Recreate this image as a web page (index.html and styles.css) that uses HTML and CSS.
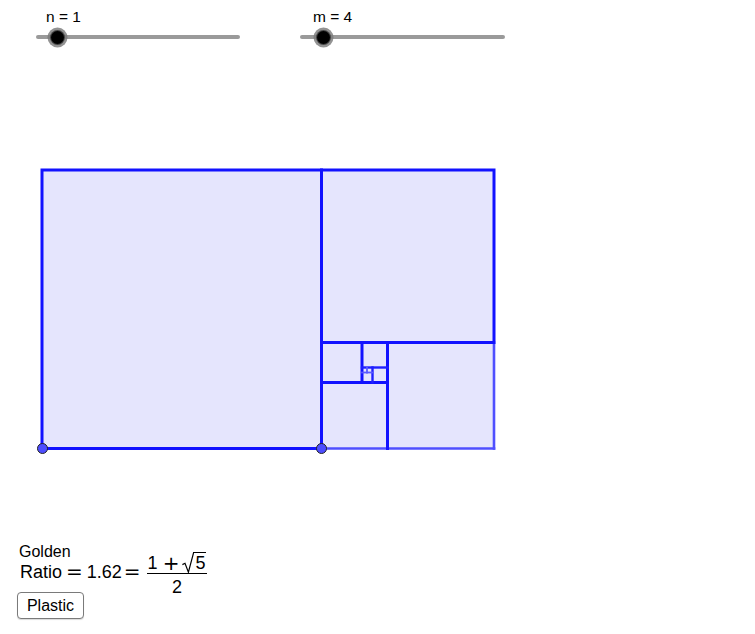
FILE: index.html
```html
<!DOCTYPE html>
<html lang="en">
<head>
<meta charset="utf-8">
<title>Golden Ratio</title>
<link rel="stylesheet" href="styles.css">
</head>
<body>
<div class="applet">
  <svg class="drawing" width="755" height="634" viewBox="0 0 755 634" xmlns="http://www.w3.org/2000/svg">
    <rect x="42" y="170" width="452" height="278.5" fill="#e5e5fd"/>
    <g stroke-linecap="square" fill="none">
      <g stroke="#4f4fff" stroke-width="2.6">
        <line x1="321.5" y1="448.5" x2="494" y2="448.5"/>
        <line x1="494" y1="342.5" x2="494" y2="448.5"/>
      </g>
      <g stroke="#1212ff" stroke-width="3">
        <rect x="42" y="170" width="279.5" height="278.5"/>
        <rect x="321.5" y="170" width="172.5" height="172.5"/>
        <line x1="387.5" y1="342.5" x2="387.5" y2="448.5"/>
        <line x1="321.5" y1="382.5" x2="387.5" y2="382.5"/>
        <line x1="362" y1="342.5" x2="362" y2="382.5"/>
      </g>
      <g stroke="#2020ff" stroke-width="2.4">
        <line x1="362" y1="367.5" x2="387.5" y2="367.5"/>
        <line x1="372.5" y1="367.5" x2="372.5" y2="382.5"/>
      </g>
      <g stroke="#5a5aff" stroke-width="1.8">
        <line x1="362" y1="372.5" x2="372.5" y2="372.5"/>
        <line x1="367" y1="367.5" x2="367" y2="372.5"/>
      </g>
    </g>
    <g fill="#4d4dff" stroke="#222" stroke-width="1">
      <circle cx="42.5" cy="448.5" r="5"/>
      <circle cx="321.5" cy="448.5" r="5"/>
    </g>
  </svg>

  <div class="slider slider-n">
    <div class="slider-label">n = 1</div>
    <div class="track"><span class="knob"></span></div>
  </div>
  <div class="slider slider-m">
    <div class="slider-label">m = 4</div>
    <div class="track"><span class="knob"></span></div>
  </div>

  <div class="formula">
    <div class="caption">Golden</div>
    <div class="math"><span class="word">Ratio</span><span class="op op-eq">=</span><span class="num">1.62</span><span class="op op-eq2">=</span><span class="frac"><span class="numer">1<span class="op op-plus">+</span><span class="sqrt"><svg class="radical" width="12" height="21" viewBox="0 0 12 21"><path d="M0.4 12.6 L3 11.3 L6.4 20.2 L11.6 0.6" fill="none" stroke="#000" stroke-width="1.2"/></svg><span class="radicand">5</span></span></span><span class="bar"></span><span class="denom">2</span></span></div>
  </div>

  <button class="btn" type="button">Plastic</button>
</div>
</body>
</html>
```
FILE: styles.css
```css
html, body {
  margin: 0;
  padding: 0;
  background: #fff;
}

.applet {
  position: relative;
  width: 755px;
  height: 634px;
  overflow: hidden;
  font-family: "Liberation Sans", Arial, sans-serif;
  color: #000;
}

.drawing {
  position: absolute;
  left: 0;
  top: 0;
}

.slider {
  position: absolute;
  top: 8px;
}

.slider-n {
  left: 36px;
  width: 204px;
}

.slider-m {
  left: 300px;
  width: 205px;
}

.slider-label {
  font-size: 15.5px;
  line-height: 17px;
  margin-left: 10px;
}

.slider-m .slider-label {
  margin-left: 13px;
}

.track {
  position: relative;
  margin-top: 10px;
  height: 4px;
  border-radius: 2px;
  background: #9a9a9a;
}

.knob {
  position: absolute;
  left: 21.5px;
  top: 2px;
  width: 13px;
  height: 13px;
  margin: -6.5px 0 0 -6.5px;
  border-radius: 50%;
  background: #000;
  box-shadow: 0 0 0 1px #444, 0 0 0 3.5px rgba(120, 120, 120, 0.8);
}

.slider-m .knob {
  left: 23px;
}

.formula {
  position: absolute;
  left: 19px;
  top: 543px;
}

.caption {
  font-size: 16px;
  line-height: 18px;
}

.math {
  margin-top: -11px;
  font-size: 18px;
  line-height: 20px;
  white-space: nowrap;
}

.word, .num {
  display: inline-block;
}

.word {
  padding-left: 1px;
}

.op {
  font-family: "DejaVu Sans", sans-serif;
  font-size: 20px;
  display: inline-block;
}

.op-eq {
  margin: 0 4px 0 4px;
}

.op-eq2 {
  margin: 0 6px 0 2px;
}

.op-plus {
  margin: 0 3px 0 5px;
}

.frac {
  display: inline-flex;
  flex-direction: column;
  align-items: center;
  vertical-align: middle;
}

.numer {
  display: flex;
  align-items: flex-end;
  height: 23px;
  line-height: 20px;
  padding: 0 1px 0 1px;
}

.sqrt {
  display: inline-flex;
  align-items: flex-start;
  height: 21px;
}

.radical {
  display: block;
  margin-right: -1px;
}

.radicand {
  display: block;
  border-top: 1.2px solid #000;
  line-height: 20px;
  padding: 0 1px 0 2px;
}

.bar {
  align-self: stretch;
  height: 1px;
  background: #000;
}

.denom {
  line-height: 20px;
  padding-top: 3px;
}

.btn {
  position: absolute;
  left: 17px;
  top: 592px;
  width: 67px;
  height: 27px;
  padding: 0;
  border: 1px solid #7a7a7a;
  border-radius: 4px;
  background: #fff;
  font-family: "Liberation Sans", Arial, sans-serif;
  font-size: 16px;
  color: #000;
  box-shadow: 0 1px 1px rgba(0, 0, 0, 0.15);
}
```
